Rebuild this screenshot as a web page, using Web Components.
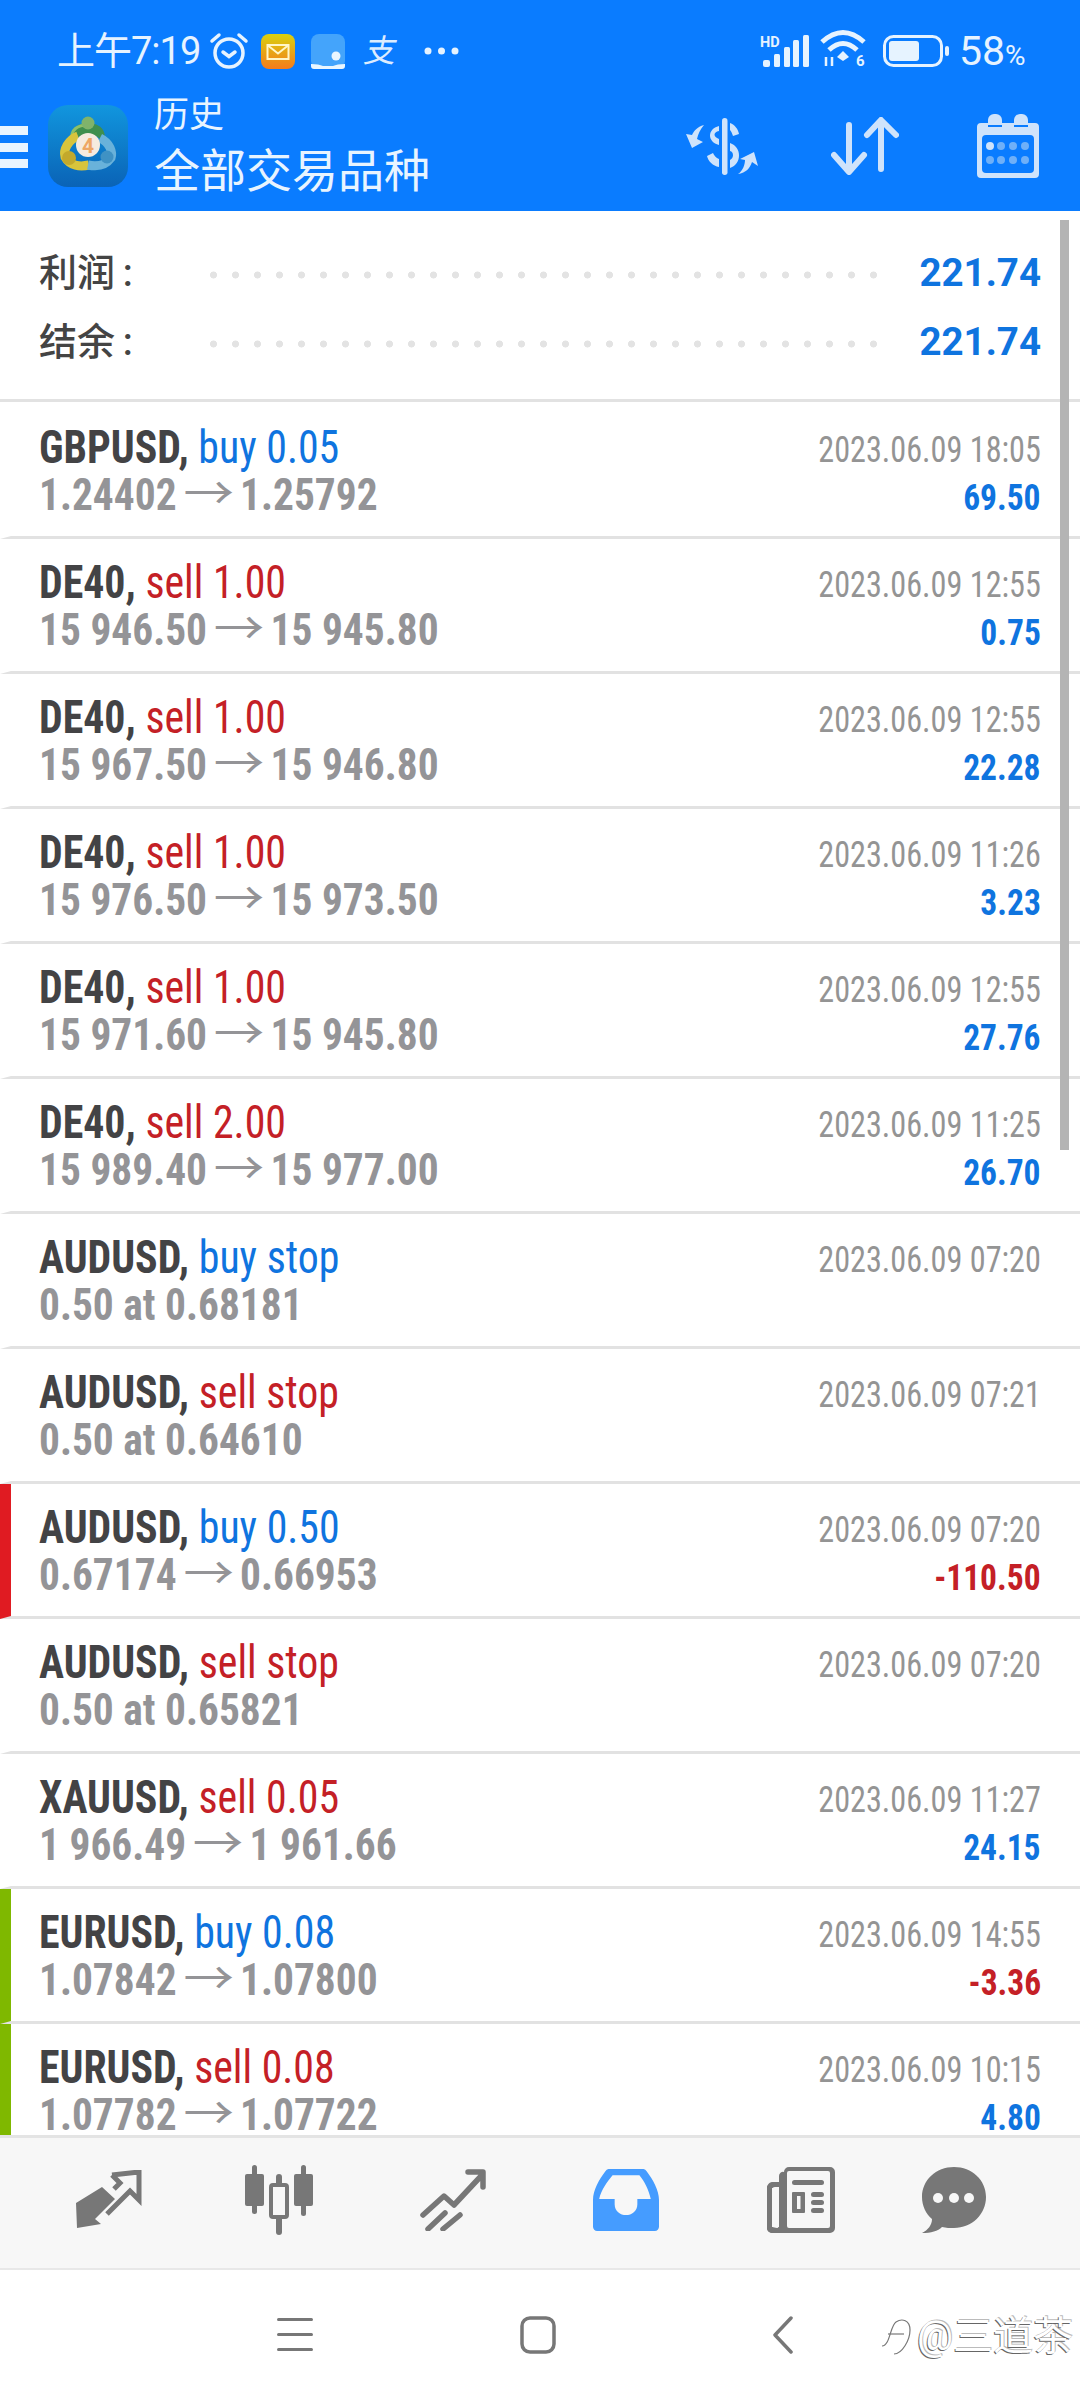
<!doctype html>
<html>
<head>
<meta charset="utf-8">
<style>
  html,body{margin:0;height:100%;background:#fff;overflow:hidden}
  body{font-family:Roboto,"Noto Sans CJK SC",sans-serif}
  mt-app{height:2400px}
</style>
</head>
<body>
<script>
const CJK = 'Roboto,"Noto Sans CJK SC",sans-serif';

class StatusBar extends HTMLElement {
  constructor(){
    super();
    this.attachShadow({mode:'open'}).innerHTML = `
      <style>
        :host{display:flex;align-items:center;height:100px;padding:2px 55px 0 57px;color:#e6f3ff;font-family:${CJK};box-sizing:border-box}
        .time{font-size:38px;letter-spacing:-1px;line-height:1;white-space:nowrap}
        .icons{display:flex;align-items:center;margin-left:9px}
        .spacer{flex:1}
        .pct{font-size:41px;line-height:1;margin-left:10px;width:66px;white-space:nowrap}
        .pct small{font-size:28px}
        .zhi{font-size:32px;line-height:1;color:#dcecff;width:36px;text-align:center;transform:skewX(-12deg)}
        svg{display:block}
      </style>
      <span class="time">上午7:19</span>
      <div class="icons">
        <svg width="40" height="40" viewBox="0 0 40 40" fill="none" stroke="#e6f3ff" stroke-width="3.500" stroke-linecap="round">
          <circle cx="20" cy="22" r="14"/><path d="M14 21l6 4.500 6-4.500"/><path d="M3 10l7-6M37 10l-7-6"/>
        </svg>
        <svg width="34" height="35" viewBox="0 0 34 35" style="margin-left:12px">
          <defs><linearGradient id="m" x1="0" y1="0" x2="0" y2="1"><stop offset="0" stop-color="#d9d10f"/><stop offset="1" stop-color="#f57b1c"/></linearGradient></defs>
          <rect width="34" height="35" rx="8" fill="url(#m)"/>
          <rect x="6.500" y="11" width="21" height="14" fill="none" stroke="#fff6c8" stroke-width="2"/>
          <path d="M7 11.500l10 8 10-8" fill="none" stroke="#fff6c8" stroke-width="2"/>
        </svg>
        <svg width="34" height="35" viewBox="0 0 34 35" style="margin-left:16px">
          <rect width="34" height="35" rx="8" fill="#44a4fb"/>
          <path d="M0 30q8 0 12 2h10q4-2 12-2v2a3 3 0 0 1-3 3H3a3 3 0 0 1-3-3z" fill="#eaf6ff"/>
          <circle cx="25" cy="22" r="4.500" fill="#eaf6ff"/>
        </svg>
        <span class="zhi" style="margin-left:18px">支</span>
        <svg width="37" height="10" viewBox="0 0 37 10" style="margin-left:24px" fill="#e6f3ff">
          <circle cx="5" cy="5" r="3.500"/><circle cx="18.500" cy="5" r="3.500"/><circle cx="32" cy="5" r="3.500"/>
        </svg>
      </div>
      <div class="spacer"></div>
      <svg width="50" height="34" viewBox="0 0 50 34">
        <text x="0" y="13" font-family="Roboto" font-weight="700" font-size="14.500" fill="#e6f3ff">HD</text>
        <g fill="#e6f3ff"><rect x="3" y="26" width="7" height="7" rx="2"/><rect x="14" y="20" width="6" height="13" rx="1.500"/><rect x="24" y="13" width="6" height="20" rx="1.500"/><rect x="33" y="6" width="6" height="27" rx="1.500"/><rect x="43" y="1" width="6" height="32" rx="1.500"/></g>
      </svg>
      <svg width="52" height="44" viewBox="0 0 52 44" style="margin-left:8px" fill="none" stroke="#e6f3ff" stroke-width="5">
        <path d="M4 13Q25-6 46 13"/><path d="M11 21Q25 8 39 21"/>
        <path d="M19 28l6-6 6 6-6 4z" fill="#e6f3ff" stroke="none"/>
        <text x="38" y="37" font-family="Roboto" font-weight="700" font-size="15" fill="#e6f3ff" stroke="none">6</text>
        <path d="M8 37v-9M14 37v-9" stroke-width="2.500"/>
      </svg>
      <svg width="66" height="32" viewBox="0 0 66 32" style="margin-left:13px">
        <rect x="1.500" y="1.500" width="57" height="29" rx="9" fill="none" stroke="#e6f3ff" stroke-width="3"/>
        <rect x="6" y="6" width="30" height="20" rx="3" fill="#e6f3ff"/>
        <rect x="62" y="11" width="4" height="10" rx="2" fill="#e6f3ff"/>
      </svg>
      <span class="pct">58<small>%</small></span>`;
  }
}
customElements.define('status-bar', StatusBar);

class TopBar extends HTMLElement {
  constructor(){
    super();
    this.attachShadow({mode:'open'}).innerHTML = `
      <style>
        :host{display:flex;align-items:center;height:111px;padding:0 40px 19px 0;color:#e8f4ff;font-family:${CJK};box-sizing:border-box}
        .burger{width:28px;display:flex;flex-direction:column;gap:7.500px;margin-top:2px}
        .burger i{display:block;height:9px;background:#e8f4ff}
        .logo{margin-left:20px;display:block;flex:none}
        .titles{margin-left:26px;display:flex;flex-direction:column;white-space:nowrap;margin-top:4px}
        .sub{font-size:35px;line-height:46px}
        .main{font-size:46px;line-height:64px}
        .actions{flex:1;display:flex;justify-content:flex-end;align-items:center}
        .actions svg{display:block;flex:none}
      </style>
      <div class="burger"><i></i><i></i><i></i></div>
      <svg class="logo" width="80" height="82" viewBox="0 0 80 82" fill="none">
        <defs>
          <linearGradient id="lg" x1="0" y1="0" x2="0" y2="1"><stop offset="0" stop-color="#1196de"/><stop offset="1" stop-color="#0a63b6"/></linearGradient>
        </defs>
        <rect width="80" height="82" rx="20" fill="url(#lg)"/>
        <path d="M24 38C20 24 30 18 40 18C50 18 60 24 56 38Q48 28 40 30Q32 28 24 38Z" fill="#3f8f4e"/>
        <path d="M24 36C22 24 30 20 40 20" stroke="#8cc06a" stroke-width="3"/>
        <circle cx="40" cy="18" r="6.500" fill="#7fb36b"/>
        <path d="M30 31C20 35 15 45 17 52C22 61 32 62 41 60" stroke="#d8c43c" stroke-width="9"/>
        <circle cx="21" cy="53" r="7" fill="#c3a92c"/>
        <path d="M52 33C62 38 65 47 63 53C58 60 50 62 40 60" stroke="#69b2da" stroke-width="9"/>
        <circle cx="59" cy="52" r="6.500" fill="#3f92c4"/>
        <circle cx="40" cy="40" r="12" fill="#f6ebdf"/>
        <text x="40" y="48" text-anchor="middle" font-family="Roboto" font-weight="700" font-size="21" fill="#eea765">4</text>
      </svg>
      <div class="titles"><span class="sub">历史</span><span class="main">全部交易品种</span></div>
      <div class="actions">
        <svg width="90" height="80" viewBox="0 0 90 80" fill="#cfe3fb">
          <rect x="52" y="12" width="5.500" height="57" rx="2.700"/>
          <path d="M34 19C27 21 24 25 22 29L16 28L22 42L33 36L27 33C28 28 30 24 34 19Z"/>
          <path d="M49 20C37 23 37 36 49 39V33C43 31 43 26 49 25Z"/>
          <path d="M60 17C65 19 68 23 69 28L63 30C62 27 61 25 60 24Z"/>
          <path d="M60 37C72 41 72 58 60 62V54C64 52 64 46 60 45Z"/>
          <path d="M37 50L43 47C44 49 46 52 49 53V61C43 60 38 55 37 50Z"/>
          <path d="M68 68C73 65 75 58 75 54L70 53L84 46L88 60L82 56C80 62 76 67 68 68Z"/>
        </svg>
        <svg width="68" height="58" viewBox="0 0 68 58" fill="none" stroke="#cfe3fb" stroke-width="6" stroke-linecap="round" stroke-linejoin="round" style="margin-left:71px">
          <path d="M18 8v46M3 38l15 17 15-17"/><path d="M50 52V4M36 18L50 3l15 15"/>
        </svg>
        <svg width="64" height="66" viewBox="0 0 62 66" style="margin-left:77px">
          <path d="M4 10h7v-3a6 6 0 0 1 6-6h2a6 6 0 0 1 6 6v3h12v-3a6 6 0 0 1 6-6h2a6 6 0 0 1 6 6v3h7a4 4 0 0 1 4 4v47a4 4 0 0 1-4 4H4a4 4 0 0 1-4-4V14a4 4 0 0 1 4-4z" fill="#cfe3fb"/>
          <path d="M11 13h14M37 13h14" stroke="#0a7cff" stroke-width="2"/>
          <rect x="5" y="22" width="52" height="38" rx="4" fill="#0a7cff"/>
          <g fill="#6fb0f8"><circle cx="24" cy="33" r="4"/><circle cx="36" cy="33" r="4"/><circle cx="48" cy="33" r="4"/><circle cx="13" cy="47" r="4"/><circle cx="24" cy="47" r="4"/><circle cx="36" cy="47" r="4"/><circle cx="48" cy="47" r="4"/></g>
          <circle cx="13" cy="33" r="4" fill="#cfe3fb"/>
        </svg>
      </div>`;
  }
}
customElements.define('top-bar', TopBar);

class SummaryLine extends HTMLElement {
  constructor(){
    super();
    this.attachShadow({mode:'open'}).innerHTML = `
      <style>
        :host{display:flex;align-items:center;height:69.500px;font-family:${CJK}}
        .label{width:171px;font-size:38px;font-weight:500;color:#444;line-height:1;white-space:nowrap}
        .dots{width:668px;height:8px;margin-top:4px;background:radial-gradient(circle at 3.500px 4px,#e3e3e3 3.200px,transparent 3.800px) 0 0/22px 8px repeat-x}
        .value{flex:1;text-align:right;font-size:38.500px;font-weight:700;color:#0f74df;line-height:1}
      </style>
      <span class="label"><slot name="label"></slot></span><span class="dots"></span><span class="value"><slot name="value"></slot></span>`;
  }
}
customElements.define('summary-line', SummaryLine);

class DealRow extends HTMLElement {
  constructor(){
    super();
    this.attachShadow({mode:'open'}).innerHTML = `
      <style>
        :host{display:flex;justify-content:space-between;height:135px;box-sizing:border-box;padding-left:28px;padding-right:39px;
          border-left:11px solid var(--mark,transparent);border-bottom:3px solid #e2e2e2;flex:none;
          font-family:Roboto,"Noto Sans CJK SC",sans-serif;font-stretch:75%}
        .col{display:flex;flex-direction:column}
        .right{align-items:flex-end}
        .t1{font-size:46px;line-height:48px;margin-top:19px;white-space:nowrap;transform:scaleX(.91);transform-origin:left}
        .t2{font-size:45px;line-height:48px;white-space:nowrap;font-weight:700;color:#949497;transform:scaleX(.92);transform-origin:left}
        .t2 .arrow{font-weight:400;display:inline-block;margin:0 12px;transform:scaleX(1.22)}
        .sym{font-weight:700;color:#434345}
        .buy{color:#0f74df}.sell{color:#c42026}
        .date{font-size:37px;line-height:40px;margin-top:26px;color:#949494;white-space:nowrap;transform:scaleX(.87);transform-origin:right}
        .pl{font-size:37px;line-height:42px;margin-top:7px;font-weight:700;white-space:nowrap;transform:scaleX(.905);transform-origin:right;min-height:42px}
        .pos{color:#0f74df}.neg{color:#c42026}
      </style>
      <div class="col"><div class="t1"><span class="sym"></span><span class="side"></span></div><div class="t2"></div></div>
      <div class="col right"><div class="date"></div><div class="pl"></div></div>`;
  }
  connectedCallback(){
    const r = this.shadowRoot, g = n => this.getAttribute(n) || '';
    r.querySelector('.sym').textContent = g('symbol') + ', ';
    const s = r.querySelector('.side');
    s.textContent = g('side');
    s.className = 'side ' + (g('side').startsWith('buy') ? 'buy' : 'sell');
    // the arrow comes from the CJK face, in a lighter weight than the prices
    const price = g('price').split('→');
    const t2 = r.querySelector('.t2');
    t2.textContent = price[0].trim();
    if (price[1]) {
      const a = document.createElement('span');
      a.className = 'arrow';
      a.textContent = '→';
      t2.append(a, price[1].trim());
    }
    r.querySelector('.date').textContent = g('date');
    const pl = r.querySelector('.pl');
    pl.textContent = g('profit');
    pl.className = 'pl ' + (g('profit').startsWith('-') ? 'neg' : 'pos');
    if (g('mark')) this.style.setProperty('--mark', g('mark'));
  }
}
customElements.define('deal-row', DealRow);

class TabBar extends HTMLElement {
  constructor(){
    super();
    this.attachShadow({mode:'open'}).innerHTML = `
      <style>
        :host{display:grid;grid-template-columns:220px 118px 230px 116px 234px 72px;height:135px;background:#f7f7f7;
          border-top:3px solid #e4e4e4;border-bottom:2px solid #e8e8e8;box-sizing:border-box;align-items:center;justify-items:center;padding-bottom:6px}
        svg{display:block}
      </style>
      <svg width="68" height="60" viewBox="0 0 68 60" fill="#777">
        <path d="M1 58L0 33L26 17L39 29L19 49L25 54Z"/>
        <path d="M36 5L63 2V30L54 21L31 44M36 5L44 13L38 19" fill="none" stroke="#777" stroke-width="5"/>
      </svg>
      <svg width="68" height="70" viewBox="0 0 68 70" fill="#777">
        <rect x="0" y="9" width="19" height="32" rx="2"/><rect x="7" y="0" width="5" height="49" rx="2.500"/>
        <rect x="49" y="9" width="19" height="32" rx="2"/><rect x="56" y="0" width="5" height="51" rx="2.500"/>
        <rect x="31" y="9" width="6" height="61" rx="3"/>
        <rect x="26" y="20" width="16" height="32" rx="2" fill="#f7f7f7" stroke="#777" stroke-width="4"/>
      </svg>
      <svg width="66" height="62" viewBox="0 0 66 62" fill="none" stroke="#777" stroke-width="5.500" stroke-linecap="round" stroke-linejoin="round">
        <path d="M3 46L24 27l10 9L62 6M48 3h15v15"/><path d="M8 60l17-16M23 60l17-14"/>
      </svg>
      <svg width="66" height="62" viewBox="0 0 64 60">
        <path d="M12 2a5 5 0 0 1 3-2h34a5 5 0 0 1 3 2c6 8 12 18 12 28v26a4 4 0 0 1-4 4H4a4 4 0 0 1-4-4V30C0 20 6 10 12 2z" fill="#459cff"/>
        <path d="M19 6h26c5 6 9 14 11 23H43v5c0 14-22 14-22 0v-5H6c2-9 8-17 13-23z" fill="#f7f7f7"/>
      </svg>
      <svg width="68" height="66" viewBox="0 0 68 66">
        <path d="M17 5a5 5 0 0 1 5-5h41a5 5 0 0 1 5 5v56a5 5 0 0 1-5 5H5a5 5 0 0 1-5-5V22a7 7 0 0 1 7-7h5v5H8a3 3 0 0 0-3 3v35a3 3 0 0 0 7 0V9a4 4 0 0 1 5-4z" fill="#777"/>
        <rect x="20" y="4" width="43" height="57" rx="2" fill="#f7f7f7"/>
        <rect x="5" y="21" width="7" height="39" fill="#f7f7f7"/>
        <path d="M5 23a2 2 0 0 1 2-3h5v-5H7a6 6 0 0 0-7 7v39a5 5 0 0 0 5 5h14v-5h-9l-5-1z" fill="#777"/>
        <rect x="25" y="13" width="32" height="5" rx="2.500" fill="#777"/>
        <rect x="25" y="25" width="13" height="21" rx="1" fill="#777"/><rect x="30" y="29" width="3.500" height="13" fill="#f7f7f7"/>
        <rect x="44" y="25" width="13" height="5" rx="2.500" fill="#777"/><rect x="44" y="33" width="13" height="5" rx="2.500" fill="#777"/><rect x="44" y="41" width="13" height="5" rx="2.500" fill="#777"/>
      </svg>
      <svg width="66" height="66" viewBox="0 0 64 66">
        <path d="M32 0C14 0 0 13 0 30c0 9 4 17 10 22 0 6-4 11-10 14 9 0 16-2 20-6 4 1 8 1 12 1 18 0 32-14 32-31S50 0 32 0z" fill="#777"/>
        <g fill="#f7f7f7"><circle cx="16" cy="31" r="5"/><circle cx="32" cy="31" r="5"/><circle cx="47" cy="31" r="5"/></g>
      </svg>`;
  }
}
customElements.define('tab-bar', TabBar);

class NavBar extends HTMLElement {
  constructor(){
    super();
    this.attachShadow({mode:'open'}).innerHTML = `
      <style>
        :host{display:grid;grid-template-columns:277px 36px 207px 36px 217px 20px 1fr;height:130px;background:#fff;align-items:center;position:relative}
        svg{display:block}
        .mark{position:absolute;left:880px;top:46px;display:flex;align-items:center;gap:3px;font-family:${CJK};font-size:40px;line-height:1;color:#fff;
          text-shadow:-1px 1px 0 #666,1px -1px 0 #bbb}
      </style>
      <span></span>
      <svg width="36" height="34" viewBox="0 0 36 34" fill="#777"><rect y="0" width="36" height="3" rx="1.500"/><rect y="15" width="36" height="3" rx="1.500"/><rect y="30" width="36" height="3" rx="1.500"/></svg>
      <span></span>
      <svg width="36" height="38" viewBox="0 0 36 38" fill="none" stroke="#777" stroke-width="3.500"><rect x="2" y="2" width="32" height="34" rx="8"/></svg>
      <span></span>
      <svg width="20" height="38" viewBox="0 0 20 38" fill="none" stroke="#777" stroke-width="3.500" stroke-linecap="round" stroke-linejoin="round"><path d="M18 2L2 19l16 17"/></svg>
      <div class="mark">
        <svg width="34" height="42" viewBox="0 0 34 42" fill="none" stroke="#777" stroke-width="1.200"><path d="M2 30C10 30 10 10 16 6s14-2 14 8-8 24-16 24"/><path d="M8 18h16"/></svg>
        <span>@三道茶</span>
      </div>`;
  }
}
customElements.define('nav-bar', NavBar);

class MtApp extends HTMLElement {
  constructor(){
    super();
    this.attachShadow({mode:'open'}).innerHTML = `
      <style>
        :host{display:flex;flex-direction:column;width:1080px;height:2400px;position:relative;overflow:hidden;background:#fff}
        .head{background:#0a7cff;height:211px;flex:none}
        .summary{height:188px;flex:none;box-sizing:border-box;padding:27px 39px 0 39px}
        .rule{height:3px;background:#e2e2e2;flex:none}
        .list{flex:1;overflow:hidden;display:flex;flex-direction:column;min-height:0;padding-top:2px}
        .scroll{position:absolute;left:1060px;top:220px;width:9px;height:930px;background:#b4b4b4}
      </style>
      <div class="head"><slot name="head"></slot></div>
      <div class="summary"><slot name="summary"></slot></div>
      <div class="rule"></div>
      <div class="list"><slot></slot></div>
      <slot name="bottom"></slot>
      <div class="scroll"></div>`;
  }
}
customElements.define('mt-app', MtApp);
</script>

<mt-app>
  <status-bar slot="head"></status-bar>
  <top-bar slot="head"></top-bar>
  <summary-line slot="summary"><span slot="label">利润&#8201;:</span><span slot="value">221.74</span></summary-line>
  <summary-line slot="summary"><span slot="label">结余&#8201;:</span><span slot="value">221.74</span></summary-line>

  <deal-row symbol="GBPUSD" side="buy 0.05" price="1.24402 → 1.25792" date="2023.06.09 18:05" profit="69.50"></deal-row>
  <deal-row symbol="DE40" side="sell 1.00" price="15 946.50 → 15 945.80" date="2023.06.09 12:55" profit="0.75"></deal-row>
  <deal-row symbol="DE40" side="sell 1.00" price="15 967.50 → 15 946.80" date="2023.06.09 12:55" profit="22.28"></deal-row>
  <deal-row symbol="DE40" side="sell 1.00" price="15 976.50 → 15 973.50" date="2023.06.09 11:26" profit="3.23"></deal-row>
  <deal-row symbol="DE40" side="sell 1.00" price="15 971.60 → 15 945.80" date="2023.06.09 12:55" profit="27.76"></deal-row>
  <deal-row symbol="DE40" side="sell 2.00" price="15 989.40 → 15 977.00" date="2023.06.09 11:25" profit="26.70"></deal-row>
  <deal-row symbol="AUDUSD" side="buy stop" price="0.50 at 0.68181" date="2023.06.09 07:20"></deal-row>
  <deal-row symbol="AUDUSD" side="sell stop" price="0.50 at 0.64610" date="2023.06.09 07:21"></deal-row>
  <deal-row symbol="AUDUSD" side="buy 0.50" price="0.67174 → 0.66953" date="2023.06.09 07:20" profit="-110.50" mark="#e01b22"></deal-row>
  <deal-row symbol="AUDUSD" side="sell stop" price="0.50 at 0.65821" date="2023.06.09 07:20"></deal-row>
  <deal-row symbol="XAUUSD" side="sell 0.05" price="1 966.49 → 1 961.66" date="2023.06.09 11:27" profit="24.15"></deal-row>
  <deal-row symbol="EURUSD" side="buy 0.08" price="1.07842 → 1.07800" date="2023.06.09 14:55" profit="-3.36" mark="#7fb800"></deal-row>
  <deal-row symbol="EURUSD" side="sell 0.08" price="1.07782 → 1.07722" date="2023.06.09 10:15" profit="4.80" mark="#7fb800"></deal-row>

  <tab-bar slot="bottom"></tab-bar>
  <nav-bar slot="bottom"></nav-bar>
</mt-app>
</body>
</html>
